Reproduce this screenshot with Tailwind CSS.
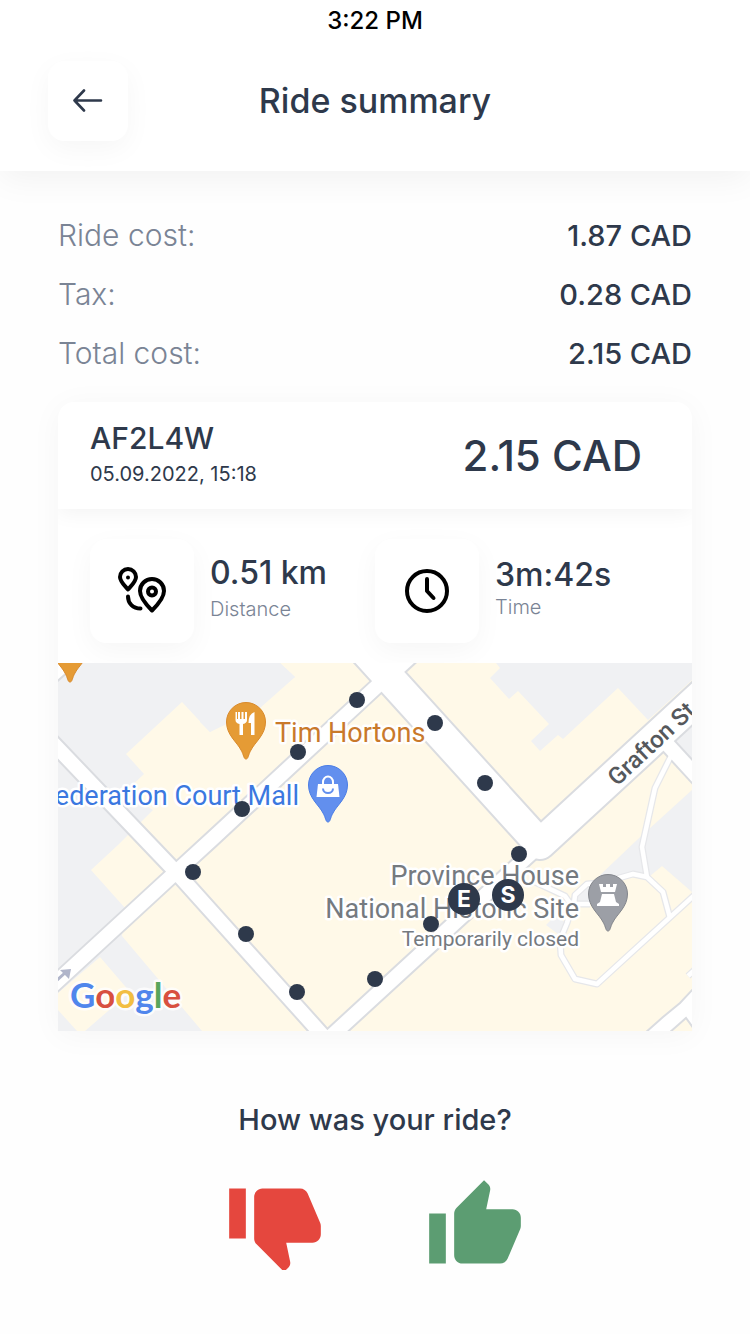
<!DOCTYPE html>
<html lang="en">
<head>
<meta charset="utf-8">
<meta name="viewport" content="width=device-width, initial-scale=1">
<title>Ride summary</title>
<script src="https://cdn.jsdelivr.net/npm/@tailwindcss/browser@4"></script>
</head>
<body class="min-h-screen bg-[#fefefe] font-['Inter',sans-serif] text-[#2e394b]">
<header class="bg-white shadow-[0_8px_32px_rgba(0,0,0,0.05)]">
  <div class="flex h-[41px] items-center justify-center text-2xl font-medium text-black">3:22 PM</div>
  <div class="grid grid-cols-[1fr_auto_1fr] items-center px-12 pt-5 pb-[30px]">
    <button type="button" aria-label="Back" class="flex size-20 items-center justify-center rounded-2xl bg-white shadow-[0_8px_28px_rgba(0,0,0,0.04)]">
      <svg class="h-6 w-8" viewBox="0 0 32 24" fill="none" stroke="#2e394b" stroke-width="2.6" stroke-linecap="round" stroke-linejoin="round" aria-hidden="true"><path d="M29 11.500H2.500M12 1.500 2.500 11.500 12 21.500"/></svg>
    </button>
    <h1 class="text-[34px] leading-10 font-medium">Ride summary</h1>
  </div>
</header>

<main class="px-[58px] pt-[35px] pb-12">
  <dl class="text-[29px] leading-[59px]">
    <div class="flex justify-between"><dt class="text-[30px] font-light text-[#7a8495]">Ride cost:</dt><dd class="font-medium">1.87 CAD</dd></div>
    <div class="flex justify-between"><dt class="text-[30px] font-light text-[#7a8495]">Tax:</dt><dd class="font-medium">0.28 CAD</dd></div>
    <div class="flex justify-between"><dt class="text-[30px] font-light text-[#7a8495]">Total cost:</dt><dd class="font-medium">2.15 CAD</dd></div>
  </dl>

  <section class="mt-[19px] overflow-hidden rounded-t-2xl bg-white shadow-[0_4px_32px_rgba(0,0,0,0.04)]">
    <div class="flex h-[107px] items-center justify-between pr-[50px] pl-8 shadow-[0_4px_20px_rgba(0,0,0,0.05)]">
      <div>
        <h2 class="text-[30px] leading-9 font-medium">AF2L4W</h2>
        <p class="text-xl leading-9">05.09.2022, 15:18</p>
      </div>
      <p class="text-[42px] leading-[48px] font-medium">2.15 CAD</p>
    </div>

    <div class="grid grid-cols-[285px_1fr] px-8 pt-[30px] pb-5">
      <div class="flex gap-4">
        <div class="flex size-[104px] shrink-0 items-center justify-center rounded-2xl bg-white shadow-[0_8px_28px_rgba(0,0,0,0.04)]">
          <svg class="size-12" viewBox="0 0 48 48" fill="none" stroke="#000" stroke-width="4" stroke-linecap="round" stroke-linejoin="round" aria-hidden="true">
            <path d="M10 22.500C6 18 2 14.500 2 10a8 8 0 0 1 16 0c0 4.500-4 8-8 12.500Z"/>
            <circle cx="10" cy="10.500" r="2" fill="#000" stroke="none"/>
            <path d="M34 43.500C28 37.500 22 31 22 24a12 12 0 0 1 24 0c0 7-6 13.500-12 19.500Z"/>
            <circle cx="34" cy="24.500" r="4"/>
            <path d="M10 29.500c0 7 5 12 12.500 12"/>
          </svg>
        </div>
        <div class="pt-3.5">
          <p class="text-[32px] leading-10 font-medium">0.51 km</p>
          <p class="text-xl leading-8 font-light text-[#7a8495]">Distance</p>
        </div>
      </div>
      <div class="flex gap-4">
        <div class="flex size-[104px] shrink-0 items-center justify-center rounded-2xl bg-white shadow-[0_8px_28px_rgba(0,0,0,0.04)]">
          <svg class="size-12" viewBox="0 0 48 48" fill="none" stroke="#000" stroke-width="4" stroke-linecap="round" stroke-linejoin="round" aria-hidden="true"><circle cx="24" cy="24" r="20"/><path d="M24 12v12l6.500 7"/></svg>
        </div>
        <div class="pt-4">
          <p class="text-[32px] leading-10 font-medium">3m:42s</p>
          <p class="text-xl leading-6 font-light text-[#7a8495]">Time</p>
        </div>
      </div>
    </div>

    <svg class="block h-auto w-full" viewBox="58 663 634 368" role="img" aria-label="Map of the ride" font-family="Roboto, sans-serif">
      <defs>
        <path id="pin" d="M0 37C-2.500 37-2 33-5 28-9 20-19.500 13-19.500 0a19.500 19.500 0 0 1 39 0C19.500 13 9 20 5 28 2 33 2.500 37 0 37Z"/>
        <g id="streets">
          <path d="M50 740 176 872 325 1038M50 988 176 872 211 840 388 676"/>
          <path d="M655 731 700 780"/>
          <path d="M327 1040 425 950 540 845"/>
          <path d="M385 680 420 648"/>
          <path d="M50 677 66 663"/>
        </g>
        <g id="avenues"><path d="M355 640 540 844 705 692"/></g>
        <g id="paths">
          <path d="M673 752 655 788 642 847 647 877 633 874 612 880M647 877 663 892 670 918"/>
          <path d="M610 882 587 884 575 895 574 904 590 904M535 882 565 896 572 906 567 923 560 940 561 955 575 979 597 984 700 890"/>
          <path d="M688 976 700 965"/>
        </g>
      </defs>
      <rect x="58" y="663" width="634" height="368" fill="#fff9e8"/>
      <g fill="#f0f1f3">
        <path d="M58 663H237L242 668 247 663H280L295 677 210 732 182 702 126 754 144 774 125 792 153 810 118 845 91 870 125 908 122 936 202 1031H85L130 992 100 957 58 993Z"/>
        <path d="M260 708 295 677 280 663H200V722L210 732Z"/>
        <path d="M58 1010 77 1031H58Z"/>
        <path d="M496 663 500 668 490 678 509 699 518 691 549 724 531 741 540 751 558 735 563 739 618 688 648 720 692 680V663Z"/>
        <path d="M675 741 692 725V765Z"/>
        <path d="M692 790 637 840 597 878 605 890 633 874 650 876 662 866 692 892Z"/>
        <path d="M588 885 576 896V904L588 903 594 890Z"/>
        <path d="M546 925 556 915 568 925 558 934Z"/>
      </g>
      <g fill="none" stroke-linejoin="round">
        <use href="#paths" stroke="#e6e7ea" stroke-width="7"/>
        <use href="#streets" stroke="#dadce0" stroke-width="18"/>
        <use href="#avenues" stroke="#dadce0" stroke-width="34"/>
        <use href="#paths" stroke="#fff" stroke-width="4.500"/>
        <use href="#streets" stroke="#fff" stroke-width="14"/>
        <use href="#avenues" stroke="#fff" stroke-width="30"/>
      </g>
      <path d="M645 1033 663 1017 680 1003 694 988V1029L686 1018 669 1033Z" fill="#fff" stroke="#dadce0" stroke-width="2"/>
      <path d="M56 981 66 972" stroke="#b0b5ca" stroke-width="3"/>
      <path d="M60 970 71 969 69 979Z" fill="#b0b5ca"/>

      <use href="#pin" x="70" y="645" fill="#e59b35" stroke="#d98a2b"/>

      <g stroke="#fff" stroke-width="5" stroke-linejoin="round" paint-order="stroke" font-size="27">
        <text x="275" y="742" fill="#c9792b">Tim Hortons</text>
        <text x="299" y="805" text-anchor="end" fill="#3b78e0">ederation Court Mall</text>
        <g fill="#757a80" text-anchor="end">
          <text x="579" y="885">Province House</text>
          <text x="579" y="918">National Historic Site</text>
          <text x="579" y="946" font-size="21">Temporarily closed</text>
        </g>
        <text transform="translate(617 787) rotate(-43)" font-size="24" font-weight="500" fill="#55585c" stroke="none">Grafton St</text>
      </g>

      <g transform="translate(246 722)">
        <use href="#pin" fill="#e59b35" stroke="#d98a2b"/>
        <path d="M-10.500-10v8q0 3 4 4v11h3.500v-11q4-1 4-4v-8h-2v7h-1.500v-7h-2v7h-1.500v-7h-2v7h-1v-7ZM8.500-10q-6 2-6 11h2.500v12h3.500Z" fill="#fff"/>
      </g>
      <g transform="translate(328 785)">
        <use href="#pin" fill="#628fee" stroke="#4a7de6"/>
        <path d="M-10-1H10L11.500 12H-11.500Z" fill="#fff"/>
        <path d="M-5 0v-3a5 5.500 0 0 1 10 0v3" fill="none" stroke="#fff" stroke-width="2"/>
        <path d="M-5 3.500a5 4.500 0 0 0 10 0" fill="none" stroke="#628fee" stroke-width="2"/>
      </g>
      <g transform="translate(608 894)">
        <use href="#pin" fill="#9c9fa6" stroke="#83868c"/>
        <path d="M-9-10h4v3h3v-3h4v3h3v-3h4l-2 8H-7ZM-6 0H6L8 8 11 10V12H-11V10L-8 8Z" fill="#fff"/>
      </g>

      <g fill="#2e394b">
        <circle cx="357" cy="700" r="8"/><circle cx="435" cy="723" r="8"/><circle cx="298" cy="752" r="8"/>
        <circle cx="485" cy="783" r="8"/><circle cx="242" cy="809" r="8"/><circle cx="193" cy="872" r="8"/>
        <circle cx="519" cy="854" r="8"/><circle cx="246" cy="934" r="8"/><circle cx="297" cy="992" r="8"/>
        <circle cx="375" cy="979" r="8"/><circle cx="431" cy="924" r="8"/>
        <circle cx="464" cy="899" r="16"/><circle cx="508" cy="895" r="16"/>
      </g>
      <g fill="#fff" font-family="Inter, sans-serif" font-size="23" font-weight="700" text-anchor="middle">
        <text x="464" y="907">E</text><text x="508" y="903">S</text>
      </g>

      <text x="70" y="1008" font-family="Lato, sans-serif" font-size="35" font-weight="700" stroke="#fff" stroke-opacity=".8" stroke-width="5" stroke-linejoin="round" paint-order="stroke"><tspan fill="#5086ec">G</tspan><tspan fill="#d85040">o</tspan><tspan fill="#f2be42">o</tspan><tspan fill="#5086ec">g</tspan><tspan fill="#58a55c">l</tspan><tspan fill="#d85040">e</tspan></text>
    </svg>
  </section>

  <section class="mt-[69px] text-center">
    <h2 class="text-[29px] leading-10 font-medium">How was your ride?</h2>
    <div class="mt-9 flex items-start justify-center gap-[100px]">
      <button type="button" aria-label="Thumbs down" class="w-[100px]">
        <svg class="block h-auto w-full" viewBox="0 0 24 22.600" fill="#e5473e" aria-hidden="true"><path transform="translate(0 24) scale(1 -1)" d="M1 21h4V9H1v12zm22-11c0-1.100-.9-2-2-2h-6.310l.95-4.570.03-.32c0-.41-.17-.79-.44-1.060L14.170 1 7.590 7.590C7.220 7.950 7 8.450 7 9v10c0 1.100.9 2 2 2h9c.83 0 1.540-.5 1.840-1.220l3.020-7.050c.09-.23.14-.47.14-.73v-2z"/></svg>
      </button>
      <button type="button" aria-label="Thumbs up" class="w-[100px]">
        <svg class="block h-auto w-full" viewBox="0 0 24 24" fill="#5c9d72" aria-hidden="true"><path d="M1 21h4V9H1v12zm22-11c0-1.100-.9-2-2-2h-6.310l.95-4.570.03-.32c0-.41-.17-.79-.44-1.060L14.170 1 7.590 7.590C7.220 7.950 7 8.450 7 9v10c0 1.100.9 2 2 2h9c.83 0 1.540-.5 1.840-1.220l3.020-7.050c.09-.23.14-.47.14-.73v-2z"/></svg>
      </button>
    </div>
  </section>
</main>
</body>
</html>
